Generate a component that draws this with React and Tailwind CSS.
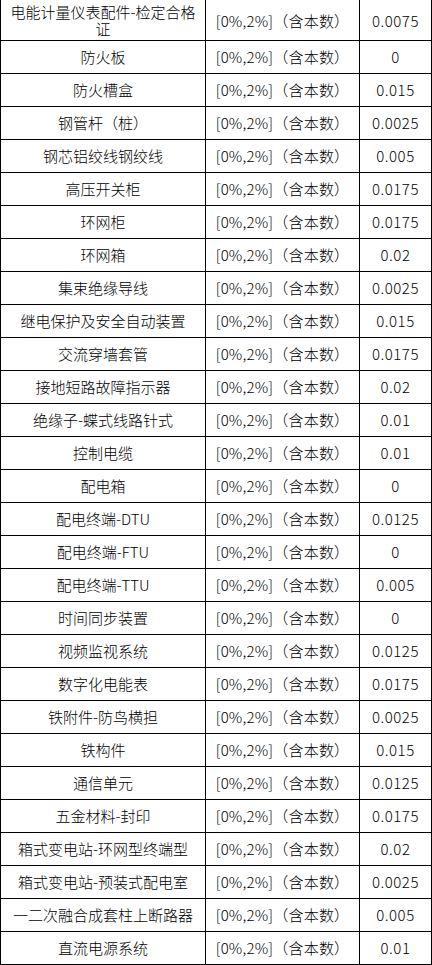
import React from "react";

const rows = [
  ["电能计量仪表配件-检定合格证", "0.0075"],
  ["防火板", "0"],
  ["防火槽盒", "0.015"],
  ["钢管杆（桩）", "0.0025"],
  ["钢芯铝绞线钢绞线", "0.005"],
  ["高压开关柜", "0.0175"],
  ["环网柜", "0.0175"],
  ["环网箱", "0.02"],
  ["集束绝缘导线", "0.0025"],
  ["继电保护及安全自动装置", "0.015"],
  ["交流穿墙套管", "0.0175"],
  ["接地短路故障指示器", "0.02"],
  ["绝缘子-蝶式线路针式", "0.01"],
  ["控制电缆", "0.01"],
  ["配电箱", "0"],
  ["配电终端-DTU", "0.0125"],
  ["配电终端-FTU", "0"],
  ["配电终端-TTU", "0.005"],
  ["时间同步装置", "0"],
  ["视频监视系统", "0.0125"],
  ["数字化电能表", "0.0175"],
  ["铁附件-防鸟横担", "0.0025"],
  ["铁构件", "0.015"],
  ["通信单元", "0.0125"],
  ["五金材料-封印", "0.0175"],
  ["箱式变电站-环网型终端型", "0.02"],
  ["箱式变电站-预装式配电室", "0.0025"],
  ["一二次融合成套柱上断路器", "0.005"],
  ["直流电源系统", "0.01"],
];

export default function App() {
  return (
    <div className="bg-white w-[432px] font-['Noto_Sans_CJK_SC',sans-serif] font-light text-[15px] text-black">
      <div className="grid grid-cols-[205px_154px_72px] border-l border-black">
        {rows.map(([name, rate], i) => {
          const h = i === 0 ? "h-[41px] leading-[17px]" : "h-[33px] leading-[20px]";
          const cell = `${h} border-r border-b border-black flex items-center justify-center text-center`;
          return (
            <React.Fragment key={name}>
              <div className={`${cell} px-2`}>{name}</div>
              <div className={`${cell} tracking-[0.2px]`}>[0%,2%]（含本数）</div>
              <div className={`${cell} tracking-[0.5px]`}>{rate}</div>
            </React.Fragment>
          );
        })}
      </div>
    </div>
  );
}
